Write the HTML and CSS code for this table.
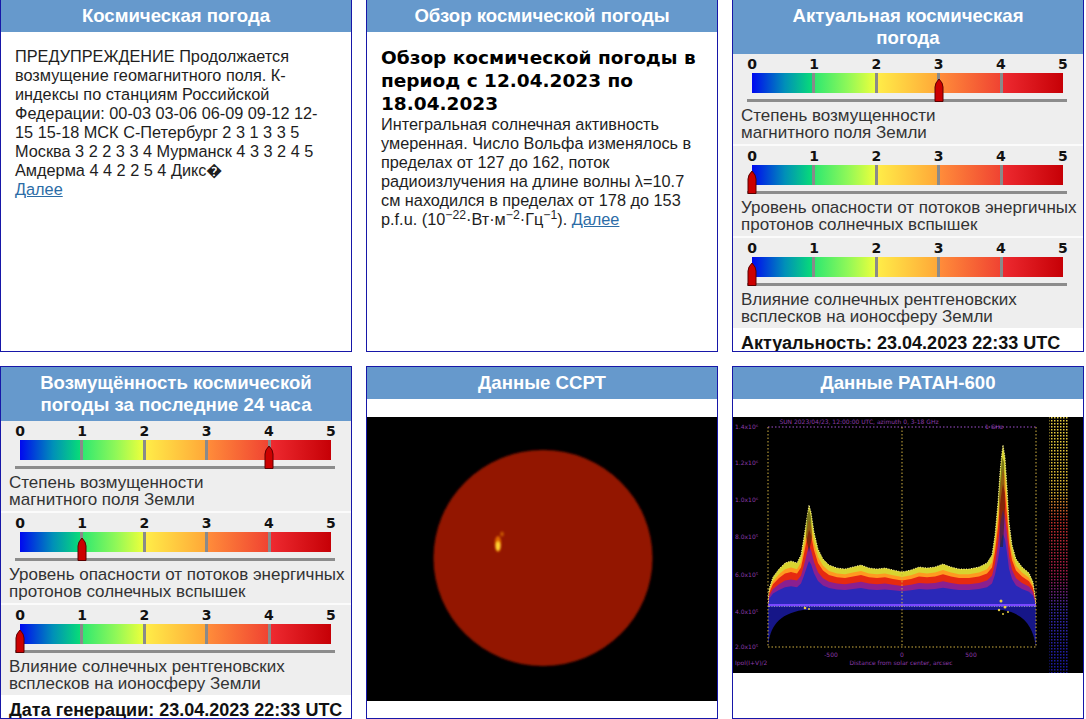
FILE: index.html
```html
<!DOCTYPE html>
<html lang="ru">
<head>
<meta charset="utf-8">
<title>Космическая погода</title>
<link rel="stylesheet" href="styles.css">
</head>
<body>
<div class="grid">

  <section class="panel">
    <h2 class="ph">Космическая погода</h2>
    <div class="text">
      <p>ПРЕДУПРЕЖДЕНИЕ Продолжается<br>возмущение геомагнитного поля. К-<br>индексы по станциям Российской<br>Федерации: 00-03 03-06 06-09 09-12 12-<br>15 15-18 МСК С-Петербург 2 3 1 3 3 5<br>Москва 3 2 2 3 3 4 Мурманск 4 3 3 2 4 5<br>Амдерма 4 4 2 2 5 4 Дикс&#xFFFD;<br><a href="#">Далее</a></p>
    </div>
  </section>

  <section class="panel">
    <h2 class="ph">Обзор космической погоды</h2>
    <div class="text">
      <h3>Обзор космической погоды в<br>период с 12.04.2023 по<br>18.04.2023</h3>
      <p class="lead">Интегральная солнечная активность<br>умеренная. Число Вольфа изменялось в<br>пределах от 127 до 162, поток<br>радиоизлучения на длине волны λ=10.7<br>см находился в пределах от 178 до 153<br>p.f.u. (10<sup>−22</sup>·Вт·м<sup>−2</sup>·Гц<sup>−1</sup>). <a href="#">Далее</a></p>
    </div>
  </section>

  <section class="panel">
    <h2 class="ph">Актуальная космическая<br>погода</h2>
    <div class="scales">
      <div class="scale">
        <div class="nums"><span>0</span><span>1</span><span>2</span><span>3</span><span>4</span><span>5</span></div>
        <div class="track">
          <div class="bar"><i></i><i></i><i></i><i></i><i></i></div>
          <div class="base"></div>
          <svg class="marker" style="--v:3" viewBox="0 0 10 24"><path d="M1 23.5V9Q1 5 5 1Q9 5 9 9V23.5Z"/></svg>
        </div>
        <div class="label">Степень возмущенности<br>магнитного поля Земли</div>
      </div>
      <div class="scale">
        <div class="nums"><span>0</span><span>1</span><span>2</span><span>3</span><span>4</span><span>5</span></div>
        <div class="track">
          <div class="bar"><i></i><i></i><i></i><i></i><i></i></div>
          <div class="base"></div>
          <svg class="marker" style="--v:0" viewBox="0 0 10 24"><path d="M1 23.5V9Q1 5 5 1Q9 5 9 9V23.5Z"/></svg>
        </div>
        <div class="label">Уровень опасности от потоков энергичных<br>протонов солнечных вспышек</div>
      </div>
      <div class="scale">
        <div class="nums"><span>0</span><span>1</span><span>2</span><span>3</span><span>4</span><span>5</span></div>
        <div class="track">
          <div class="bar"><i></i><i></i><i></i><i></i><i></i></div>
          <div class="base"></div>
          <svg class="marker" style="--v:0" viewBox="0 0 10 24"><path d="M1 23.5V9Q1 5 5 1Q9 5 9 9V23.5Z"/></svg>
        </div>
        <div class="label">Влияние солнечных рентгеновских<br>всплесков на ионосферу Земли</div>
      </div>
    </div>
    <div class="gen">Актуальность: 23.04.2023 22:33 UTC</div>
  </section>

  <section class="panel">
    <h2 class="ph">Возмущённость космической<br>погоды за последние 24 часа</h2>
    <div class="scales">
      <div class="scale">
        <div class="nums"><span>0</span><span>1</span><span>2</span><span>3</span><span>4</span><span>5</span></div>
        <div class="track">
          <div class="bar"><i></i><i></i><i></i><i></i><i></i></div>
          <div class="base"></div>
          <svg class="marker" style="--v:4" viewBox="0 0 10 24"><path d="M1 23.5V9Q1 5 5 1Q9 5 9 9V23.5Z"/></svg>
        </div>
        <div class="label">Степень возмущенности<br>магнитного поля Земли</div>
      </div>
      <div class="scale">
        <div class="nums"><span>0</span><span>1</span><span>2</span><span>3</span><span>4</span><span>5</span></div>
        <div class="track">
          <div class="bar"><i></i><i></i><i></i><i></i><i></i></div>
          <div class="base"></div>
          <svg class="marker" style="--v:1" viewBox="0 0 10 24"><path d="M1 23.5V9Q1 5 5 1Q9 5 9 9V23.5Z"/></svg>
        </div>
        <div class="label">Уровень опасности от потоков энергичных<br>протонов солнечных вспышек</div>
      </div>
      <div class="scale">
        <div class="nums"><span>0</span><span>1</span><span>2</span><span>3</span><span>4</span><span>5</span></div>
        <div class="track">
          <div class="bar"><i></i><i></i><i></i><i></i><i></i></div>
          <div class="base"></div>
          <svg class="marker" style="--v:0" viewBox="0 0 10 24"><path d="M1 23.5V9Q1 5 5 1Q9 5 9 9V23.5Z"/></svg>
        </div>
        <div class="label">Влияние солнечных рентгеновских<br>всплесков на ионосферу Земли</div>
      </div>
    </div>
    <div class="gen">Дата генерации: 23.04.2023 22:33 UTC</div>
  </section>

  <section class="panel">
    <h2 class="ph">Данные ССРТ</h2>
    <div class="pic sun">
      <svg width="351" height="284" viewBox="0 0 351 284">
        <defs>
          <filter id="soft" x="-10%" y="-10%" width="120%" height="120%"><feGaussianBlur stdDeviation="0.9"/></filter>
          <filter id="glow" x="-100%" y="-100%" width="300%" height="300%"><feGaussianBlur stdDeviation="1"/></filter>
        </defs>
        <rect width="351" height="284" fill="#000"/>
        <ellipse cx="176" cy="141" rx="109.5" ry="108" fill="#931500" filter="url(#soft)"/>
        <g filter="url(#glow)">
          <ellipse cx="131" cy="127" rx="3.2" ry="8" fill="#e06a00"/>
          <ellipse cx="131" cy="129" rx="2.2" ry="4.5" fill="#ffd430"/>
          <ellipse cx="135" cy="117" rx="1.8" ry="2.6" fill="#c85800"/>
        </g>
      </svg>
    </div>
  </section>

  <section class="panel">
    <h2 class="ph">Данные РАТАН-600</h2>
    <div class="pic ratan">
      <svg width="351" height="256" viewBox="0 0 351 256">
        <defs>
          <linearGradient id="lg" x1="0" y1="0" x2="0" y2="1">
            <stop offset="0" stop-color="#e8d040"/>
            <stop offset="0.3" stop-color="#d8b030"/>
            <stop offset="0.4" stop-color="#c03028"/>
            <stop offset="0.62" stop-color="#a01848"/>
            <stop offset="0.75" stop-color="#3828a8"/>
            <stop offset="1" stop-color="#1818a0"/>
          </linearGradient>
          <pattern id="dots" width="3" height="3" patternUnits="userSpaceOnUse">
            <rect width="1.5" height="1.5" fill="#fff"/>
          </pattern>
          <mask id="dm"><rect x="316" y="0" width="20" height="256" fill="url(#dots)"/></mask>
          <clipPath id="cl"><rect x="35" y="0" width="268" height="190"/></clipPath>
          <path id="env" d="M35,190 L36,172 L40,160 L46,152 L52,146 L58,144 L64,146 L68,138 L71,120 L74,100 L76,88 L78,95 L81,115 L85,132 L90,142 L96,148 L104,151 L112,152 L120,150 L128,148 L136,151 L144,152 L152,151 L160,153 L169,155 L178,153 L186,150 L194,151 L202,150 L210,147 L218,150 L226,152 L236,152 L246,150 L254,146 L259,138 L262,118 L265,85 L267,55 L269,35 L270,28 L272,40 L274,70 L276,105 L279,128 L283,142 L289,150 L296,156 L300,165 L302,178 L303,190 Z"/>
        </defs>
        <rect width="351" height="256" fill="#000"/>
        <text x="126" y="7" class="tiny" text-anchor="middle">SUN 2023/04/23, 12:00:00 UTC, azimuth 0, 3-18 GHz</text>
        <g class="tiny">
          <text x="2" y="12">1.4x10⁶</text>
          <text x="2" y="48">1.2x10⁶</text>
          <text x="2" y="85">1.0x10⁶</text>
          <text x="2" y="122">8.0x10⁵</text>
          <text x="2" y="160">6.0x10⁵</text>
          <text x="2" y="197">4.0x10⁵</text>
          <text x="2" y="232">2.0x10⁵</text>
          <text x="98" y="240" text-anchor="middle">-500</text>
          <text x="169" y="240" text-anchor="middle">0</text>
          <text x="238" y="240" text-anchor="middle">500</text>
          <text x="168" y="248" text-anchor="middle">Distance from solar center, arcsec</text>
          <text x="2" y="248">Ipol(I+V)/2</text>
          <text x="252" y="12">1 GHz</text>
        </g>
        <g clip-path="url(#cl)">
          <use href="#env" fill="#d8d430"/>
          <use href="#env" fill="#ff9a20" transform="translate(0,190) scale(1,0.86) translate(0,-190)"/>
          <use href="#env" fill="#e62a10" transform="translate(0,190) scale(1,0.76) translate(0,-190)"/>
          <use href="#env" fill="#8a2090" transform="translate(0,190) scale(1,0.6) translate(0,-190)"/>
          <use href="#env" fill="#2a28b8" transform="translate(0,190) scale(1,0.45) translate(0,-190)"/>
          <use href="#env" fill="none" stroke="#fff6a0" stroke-width="1" stroke-dasharray="1 1.5"/>
          <path d="M74,100 L76,92 L78,100 L79,120 L76,135 L73,120 Z M266,80 L269,40 L271,45 L272,90 L270,130 L267,130 Z" fill="#202000" opacity="0.5"/>
        </g>
        <path d="M35,190 L35,230 C37,210 45,197 70,193 L270,193 C292,197 300,210 303,230 L303,190 Z" fill="#1a1aa0" opacity="0.85"/>
        <g fill="#e8d040">
          <circle cx="72" cy="191" r="1.3"/><circle cx="76" cy="192" r="1"/><circle cx="268" cy="184" r="1.5"/>
          <circle cx="272" cy="190" r="1.5"/><circle cx="266" cy="193" r="1.2"/><circle cx="275" cy="195" r="1"/><circle cx="270" cy="197" r="1"/>
        </g>
        <line x1="35" y1="188" x2="303" y2="188" stroke="#7a48ff" stroke-width="2"/>
        <g stroke-dasharray="1.5 2" stroke-width="1">
          <line x1="35" y1="10" x2="303" y2="10" stroke="#a050d0"/>
          <line x1="35" y1="230" x2="303" y2="230" stroke="#d0b040"/>
          <line x1="35" y1="10" x2="35" y2="230" stroke="#d0b040"/>
          <line x1="303" y1="10" x2="303" y2="230" stroke="#d0b040"/>
          <line x1="169" y1="10" x2="169" y2="230" stroke="#d0b040"/>
        </g>
        <rect x="316" y="0" width="20" height="256" fill="url(#lg)" mask="url(#dm)"/>
      </svg>
    </div>
  </section>

</div>
</body>
</html>
```

FILE: styles.css
```css
body {
  margin: 0;
  background: #fff;
  font-family: "Liberation Sans", Arial, sans-serif;
}

.grid {
  display: grid;
  grid-template-columns: repeat(3, 352px);
  grid-template-rows: 353px 353px;
  gap: 14px;
  margin-top: -1px;
}

.panel {
  border: 1px solid #1717a8;
  box-sizing: border-box;
  overflow: hidden;
  background: #fff;
  display: flex;
  flex-direction: column;
}

.ph {
  margin: 0;
  padding: 5px 8px;
  background: #6699cc;
  color: #fff;
  font: bold 18.6px/22px "Liberation Sans", Arial, sans-serif;
  text-align: center;
}

.text {
  padding: 0 14px;
  font-size: 16.3px;
  line-height: 19px;
  color: #1e1e1e;
  white-space: nowrap;
}

.text p {
  margin: 15px 0 0;
}

.text p.lead {
  margin: 0;
}

.text h3 {
  margin: 14px 0 0;
  font: bold 18.5px/23px "DejaVu Sans", Verdana, sans-serif;
  color: #000;
}

.text a {
  color: #2b6ca6;
}

.text sup {
  font-size: 75%;
  line-height: 0;
}

.scales {
  background: #eeeeee;
}

.scale {
  height: 90px;
  box-sizing: border-box;
}

.scale + .scale {
  height: 92px;
  border-top: 2px solid #fbfbfb;
}

.nums {
  display: flex;
  justify-content: space-between;
  width: 325px;
  height: 19px;
  margin-left: 12px;
  font: bold 14px/20px "DejaVu Sans", Verdana, sans-serif;
  color: #111;
}

.nums span {
  width: 14px;
  text-align: center;
}

.track {
  position: relative;
  height: 29px;
}

.bar {
  display: flex;
  width: 311px;
  height: 20px;
  margin-left: 19px;
}

.bar i {
  flex: 1;
}

.bar i + i {
  border-left: 3px solid #8a8a8a;
}

.bar i:nth-child(1) { background: linear-gradient(90deg, #0008f0, #0090b8 55%, #08dc78); }
.bar i:nth-child(2) { background: linear-gradient(90deg, #30e870, #90f858 55%, #ecff3c); }
.bar i:nth-child(3) { background: linear-gradient(90deg, #ffec48, #ffa838); }
.bar i:nth-child(4) { background: linear-gradient(90deg, #ff8c3a, #f04432); }
.bar i:nth-child(5) { background: linear-gradient(90deg, #ee2a30, #c60006); }

.base {
  width: 320px;
  height: 3px;
  margin: 6px 0 0 14px;
  background: #8c8c8c;
}

.marker {
  position: absolute;
  top: 5px;
  left: calc(14px + var(--v) * 62.2px);
  width: 10px;
  height: 24px;
  fill: #cc0000;
  stroke: #5a0000;
  stroke-width: 1;
}

.label {
  margin-top: 5px;
  padding-left: 8px;
  font-size: 17px;
  line-height: 17px;
  color: #333;
  white-space: nowrap;
}

.gen {
  padding: 5px 0 0 8px;
  font: bold 18px/20px "Liberation Sans", Arial, sans-serif;
  color: #111;
  white-space: nowrap;
}

.pic {
  margin-top: 18px;
  background: #000;
}

.pic svg {
  display: block;
}

.sun {
  height: 284px;
}

.ratan {
  height: 256px;
}

.tiny {
  fill: #8a3aa8;
  font: 6px "DejaVu Sans", sans-serif;
}
```
